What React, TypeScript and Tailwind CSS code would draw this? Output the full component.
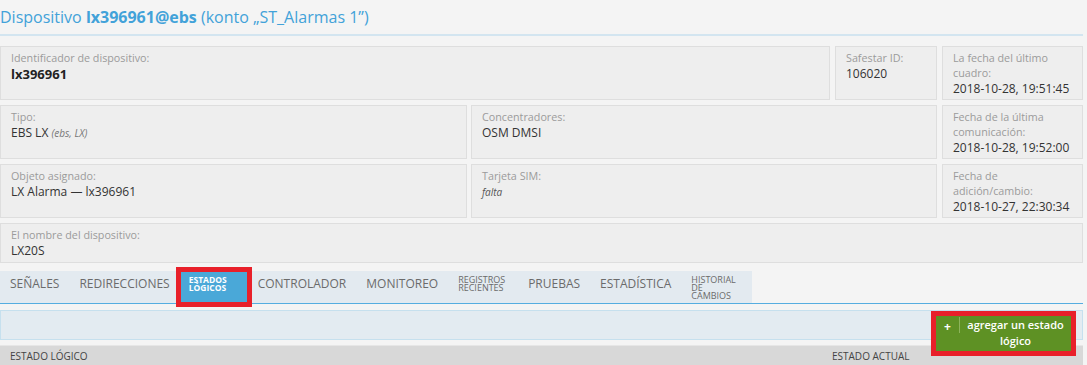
import React from "react";

function Card({ label, value, w, h, bold }: { label: string; value: React.ReactNode; w: string; h: string; bold?: boolean }) {
  return (
    <div className={`${w} ${h} shrink-0 bg-[#eeeeee] border border-[#dedede] px-[10px] pt-[4px]`}>
      <div className="text-[10.75px] leading-[15px] text-[#9b9b9b]">{label}</div>
      <div className={bold ? "text-[13px] leading-[16px] font-bold text-[#222]" : "text-[12px] leading-[16px] text-[#333]"}>{value}</div>
    </div>
  );
}

const tabs = [
  { label: "SEÑALES" },
  { label: "REDIRECCIONES" },
  { label: "ESTADOS\nLÓGICOS", small: true, active: true },
  { label: "CONTROLADOR" },
  { label: "MONITOREO" },
  { label: "REGISTROS\nRECIENTES", small: true, wide: true },
  { label: "PRUEBAS" },
  { label: "ESTADÍSTICA" },
  { label: "HISTORIAL\nDE\nCAMBIOS", small: true },
];

export default function App() {
  return (
    <div className="w-[1087px] h-[365px] overflow-hidden bg-[#f4f4f4] pr-[4px] font-['Open_Sans',sans-serif]">
      {/* Header */}
      <div className="h-[36px] flex items-center border-b-2 border-[#d3e5f0] text-[16px] text-[#42a2d9]">
        <span>
          Dispositivo <b className="font-bold">lx396961@ebs</b> (konto „ST_Alarmas 1”)
        </span>
      </div>

      {/* Info cards */}
      <div className="mt-[10px] flex flex-col gap-[5px]">
        <div className="flex gap-[5px]">
          <Card w="w-[830px]" h="h-[54px]" label="Identificador de dispositivo:" value="lx396961" bold />
          <Card w="w-[102px]" h="h-[54px]" label="Safestar ID:" value="106020" />
          <Card w="w-[141px]" h="h-[54px]" label="La fecha del último cuadro:" value="2018-10-28, 19:51:45" />
        </div>
        <div className="flex gap-[5px]">
          <div className="flex gap-[4px]">
            <Card w="w-[467px]" h="h-[54px]" label="Tipo:" value={<>EBS LX <i className="text-[10px] text-[#777]">(ebs, LX)</i></>} />
            <Card w="w-[466px]" h="h-[54px]" label="Concentradores:" value="OSM DMSI" />
          </div>
          <Card w="w-[141px]" h="h-[54px]" label="Fecha de la última comunicación:" value="2018-10-28, 19:52:00" />
        </div>
        <div className="flex gap-[5px]">
          <div className="flex gap-[4px]">
            <Card w="w-[467px]" h="h-[54px]" label="Objeto asignado:" value="LX Alarma — lx396961" />
            <Card w="w-[466px]" h="h-[54px]" label="Tarjeta SIM:" value={<i className="text-[10px] text-[#555]">falta</i>} />
          </div>
          <Card w="w-[141px]" h="h-[54px]" label="Fecha de adición/cambio:" value="2018-10-27, 22:30:34" />
        </div>
        <Card w="w-[1083px]" h="h-[40px]" label="El nombre del dispositivo:" value="LX20S" />
      </div>

      {/* Tabs */}
      <div className="mt-[8px] border-b border-[#55ade0]">
        <div className="w-[752px] h-[32px] bg-[#e3eaf0] flex items-start">
          {tabs.map((t) =>
            t.active ? (
              <div
                key={t.label}
                className="ml-[1px] mr-[1px] mt-px w-[66px] h-[30px] bg-[#4aa8d8] pl-2 pt-[4px] text-white font-bold text-[8.5px] leading-[8px] whitespace-pre outline-[5px] outline-solid outline-[#e8202a]"
              >
                {t.label}
              </div>
            ) : (
              <div
                key={t.label}
                className={`pl-[10px] text-[#6b6b6b] whitespace-pre ${t.wide ? "pr-[13px]" : "pr-[10px]"} ${
                  t.small ? "pt-[5px] text-[9px] leading-[8px]" : "pt-[5px] text-[12px] leading-[16px]"
                }`}
              >
                {t.label}
              </div>
            )
          )}
        </div>
      </div>

      {/* Toolbar */}
      <div className="mt-[6px] h-[30px] border border-[#c6e0ee] bg-[#e3ebf1] flex justify-end items-start pr-[11px]">
        <button className="relative z-10 mt-[5px] w-[135px] h-[35px] bg-[#5e9124] text-white flex items-start outline-[5px] outline-solid outline-[#e8202a]">
          <span className="w-[23px] pt-[3px] text-center text-[12px] font-bold leading-[16px]">+</span>
          <span className="mt-[1px] h-[16px] w-px bg-[#8db45c]" />
          <span className="flex-1 pt-[1px] text-center text-[11px] font-semibold leading-[16px] px-[4px]">agregar un estado lógico</span>
        </button>
      </div>

      {/* Table header */}
      <div className="mt-[5px] h-[30px] bg-[#d8d8d8] border-t border-[#e6e6e6] flex text-[10px] text-[#444] leading-[20px]">
        <div className="pl-[10px] w-[832px]">ESTADO LÓGICO</div>
        <div>ESTADO ACTUAL</div>
      </div>
    </div>
  );
}
